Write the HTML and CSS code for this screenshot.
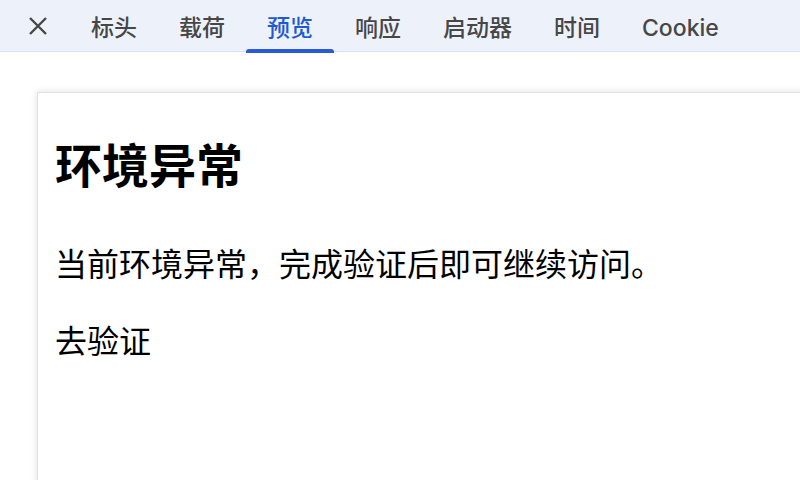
FILE: index.html
```html
<!DOCTYPE html>
<html lang="zh-CN">
<head>
  <meta charset="UTF-8">
  <meta name="viewport" content="width=device-width, initial-scale=1.0">
  <title>预览</title>
  <link rel="stylesheet" href="styles.css">
</head>
<body>
  <!-- Tab Bar -->
  <div class="tab-bar">
    <div class="close-btn">
      <svg width="20" height="20" viewBox="0 0 20 20">
        <path d="M2 2 L18 18 M18 2 L2 18" stroke="#474747" stroke-width="2.4" fill="none"/>
      </svg>
    </div>
    <div class="tab">标头</div>
    <div class="tab">载荷</div>
    <div class="tab active">预览</div>
    <div class="tab">响应</div>
    <div class="tab">启动器</div>
    <div class="tab">时间</div>
    <div class="tab">Cookie</div>
  </div>

  <!-- Preview -->
  <div class="preview">
    <div class="card">
      <h1>环境异常</h1>
      <p>当前环境异常，完成验证后即可继续访问。</p>
      <p>去验证</p>
    </div>
  </div>
</body>
</html>
```

FILE: styles.css
```css
html, body {
  margin: 0;
  padding: 0;
  background-color: #fff;
}
body {
  font-family: Inter, "Noto Sans CJK SC", sans-serif;
}
.tab-bar {
  display: flex;
  height: 51px;
  background-color: #edf2fa;
  border-bottom: 1px solid #d3e3fd;
}
.close-btn {
  width: 70px;
  box-sizing: border-box;
  padding: 16px 0 0 28px;
}
.tab {
  position: relative;
  padding: 5px 21px 0;
  line-height: 46px;
  font-size: 23px;
  font-weight: 500;
  color: #474747;
}
.tab.active {
  color: #1f5ad6;
}
.tab.active::after {
  content: "";
  position: absolute;
  left: 0;
  right: 0;
  bottom: -2px;
  height: 4px;
  background-color: #2a5bd7;
  border-radius: 3px 3px 0 0;
}
.preview {
  height: 388px;
  padding: 40px 0 0 37px;
  overflow: hidden;
}
.card {
  height: 460px;
  margin-right: -20px;
  padding: 42px 0 0 17px;
  border: 1px solid #e2e2e2;
  box-shadow: 0 0 7px rgba(0, 0, 0, 0.13);
  background-color: #fff;
  font-family: "Noto Sans CJK SC", sans-serif;
  color: #000;
}
.card h1 {
  margin: 0 0 51px;
  font-size: 47px;
  line-height: 56px;
  font-weight: 700;
}
.card p {
  margin: 0 0 37px;
  font-size: 32px;
  line-height: 40px;
}
```
